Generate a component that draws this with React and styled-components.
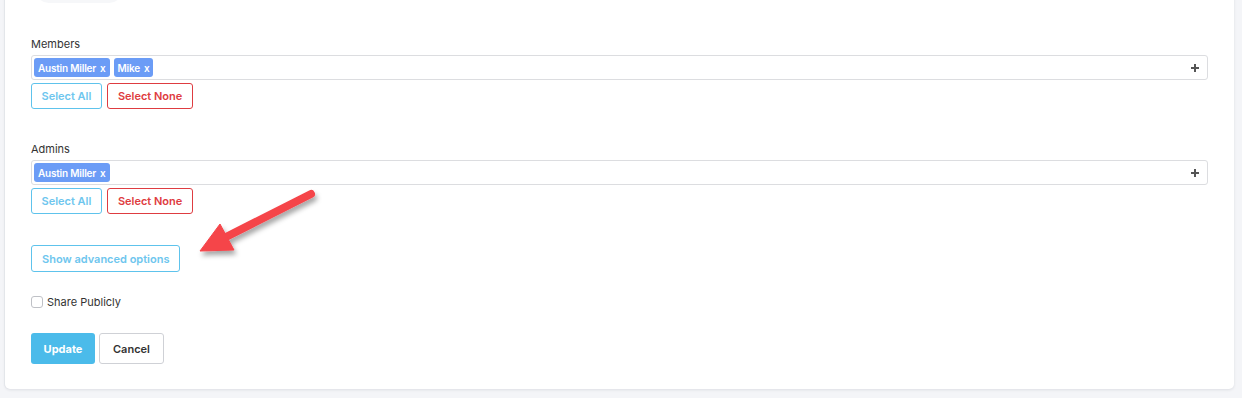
import styled, { createGlobalStyle } from 'styled-components'

const GlobalStyle = createGlobalStyle`
  html, body {
    margin: 0;
    padding: 0;
    background: #f4f5f8;
    font-family: Inter, "Noto Sans", Arial, sans-serif;
    color: #333;
  }
`

const Page = styled.div`
  position: relative;
  width: 1242px;
  height: 398px;
  overflow: hidden;
`

const Card = styled.div`
  margin: 0 0 0 5px;
  width: 1229px;
  box-sizing: border-box;
  background: #fff;
  border-radius: 0 0 5px 5px;
  box-shadow: 0 1px 3px rgba(20, 30, 50, 0.1), -1px 0 0 #eceef2;
  padding: 0 26px 25px 26px;
`

const TopPill = styled.div`
  width: 88px;
  height: 30px;
  margin: -27px 0 0 4px;
  background: #f6f7f9;
  border-radius: 14px;
`

const Section = styled.div`
  margin-top: ${p => p.gap}px;
`

const Label = styled.div`
  font-size: 11px;
  line-height: 14px;
  color: #333;
  margin-bottom: 4px;
`

const TagBox = styled.div`
  display: flex;
  align-items: center;
  gap: 4px;
  height: 25px;
  box-sizing: border-box;
  border: 1px solid #dcdde0;
  border-radius: 3px;
  padding: 0 2px;
`

const Tag = styled.span`
  display: inline-flex;
  align-items: center;
  height: 19px;
  padding: 0 4px;
  border-radius: 3px;
  background: #6b9cf6;
  color: #fff;
  font-size: 10px;
  font-weight: 600;
  letter-spacing: -0.2px;
  white-space: nowrap;

  & b {
    margin-left: 4px;
    font-weight: 600;
  }
`

const PlusIcon = styled.svg`
  margin-left: auto;
  margin-right: 6px;
`

const ButtonRow = styled.div`
  display: flex;
  gap: 5px;
  margin-top: 3px;
`

const OutlineButton = styled.button`
  height: ${p => p.h || 26}px;
  padding: 0 ${p => p.px || 9}px;
  box-sizing: border-box;
  background: #fff;
  border: 1px solid ${p => p.color};
  color: ${p => p.text || p.color};
  border-radius: 3px;
  font-family: inherit;
  font-size: 11px;
  font-weight: 600;
  cursor: pointer;
`

const CheckRow = styled.label`
  display: flex;
  align-items: center;
  gap: 4px;
  margin-top: 23px;
  font-size: 11px;
  color: #333;
`

const Check = styled.span`
  width: 12px;
  height: 12px;
  box-sizing: border-box;
  border: 1px solid #bfc1c6;
  border-radius: 3px;
  background: #fff;
`

const Actions = styled.div`
  display: flex;
  gap: 4px;
  margin-top: 24px;
`

const PrimaryButton = styled.button`
  height: 31px;
  width: 64px;
  border: none;
  border-radius: 3px;
  background: #4bbbea;
  color: #fff;
  font-family: inherit;
  font-size: 11px;
  font-weight: 700;
`

const GhostButton = styled.button`
  height: 31px;
  width: 65px;
  box-sizing: border-box;
  border: 1px solid #cfd1d6;
  border-radius: 3px;
  background: #fff;
  color: #333;
  font-family: inherit;
  font-size: 11px;
  font-weight: 600;
`

const Arrow = styled.svg`
  position: absolute;
  left: 180px;
  top: 180px;
  pointer-events: none;
`

const Plus = () => (
  <PlusIcon width="8" height="8" viewBox="0 0 8 8">
    <rect x="3" y="0" width="2" height="8" fill="#555" />
    <rect x="0" y="3" width="8" height="2" fill="#555" />
  </PlusIcon>
)

const PeopleField = ({ label, people, gap }) => (
  <Section gap={gap}>
    <Label>{label}</Label>
    <TagBox>
      {people.map(p => (
        <Tag key={p}>{p}<b>x</b></Tag>
      ))}
      <Plus />
    </TagBox>
    <ButtonRow>
      <OutlineButton color="#5ec3ec" text="#6ec6ee" px={9.5}>Select All</OutlineButton>
      <OutlineButton color="#de3c41" px={10}>Select None</OutlineButton>
    </ButtonRow>
  </Section>
)

const App = () => {
  return (
    <Page>
      <GlobalStyle />
      <Card>
        <TopPill />
        <PeopleField label="Members" people={['Austin Miller', 'Mike']} gap={34} />
        <PeopleField label="Admins" people={['Austin Miller']} gap={33} />
        <Section gap={31}>
          <OutlineButton color="#5ec3ec" text="#6ec6ee" h={27} px={10}>Show advanced options</OutlineButton>
        </Section>
        <CheckRow>
          <Check />
          Share Publicly
        </CheckRow>
        <Actions>
          <PrimaryButton>Update</PrimaryButton>
          <GhostButton>Cancel</GhostButton>
        </Actions>
      </Card>
      <Arrow width="150" height="90" viewBox="180 180 150 90">
        <defs>
          <filter id="sh" x="-30%" y="-30%" width="160%" height="160%">
            <feDropShadow dx="2" dy="4" stdDeviation="2.5" floodColor="#000" floodOpacity="0.35" />
          </filter>
        </defs>
        <g filter="url(#sh)" fill="#f5444a" stroke="#f5444a">
          <line x1="311" y1="194" x2="222" y2="239" strokeWidth="8" strokeLinecap="round" />
          <polygon points="200,251 220,224 234,250" strokeWidth="1" strokeLinejoin="round" />
        </g>
      </Arrow>
    </Page>
  )
}

export default App
